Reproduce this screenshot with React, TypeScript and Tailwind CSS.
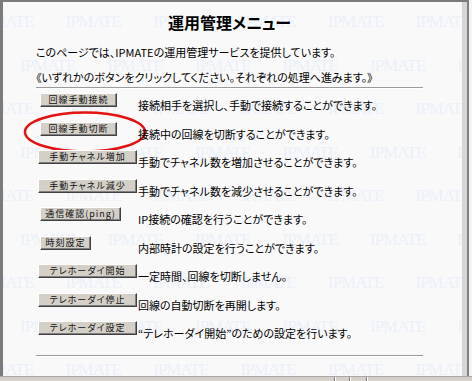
import React from 'react';

const rows = [
  { label: '回線手動接続', w: 'w-[77px] ml-[4px]', text: '接続相手を選択し、手動で接続することができます。' },
  { label: '回線手動切断', w: 'w-[77px] ml-[4px]', text: '接続中の回線を切断することができます。' },
  { label: '手動チャネル増加', w: 'w-[99px] ml-[2px]', text: '手動でチャネル数を増加させることができます。' },
  { label: '手動チャネル減少', w: 'w-[99px] ml-[2px]', text: '手動でチャネル数を減少させることができます。' },
  { label: '通信確認(ping)', w: 'w-[81px] ml-[4px]', text: 'IP接続の確認を行うことができます。' },
  { label: '時刻設定', w: 'w-[51px] ml-[4px]', text: '内部時計の設定を行うことができます。' },
  { label: 'テレホーダイ開始', w: 'w-[99px] ml-[2px]', text: '一定時間、回線を切断しません。' },
  { label: 'テレホーダイ停止', w: 'w-[99px] ml-[2px]', text: '回線の自動切断を再開します。' },
  { label: 'テレホーダイ設定', w: 'w-[99px] ml-[2px]', text: '“テレホーダイ開始”のための設定を行います。' },
];

function Watermark() {
  const lines = Array.from({ length: 9 });
  return (
    <div className="absolute left-0 right-0 -top-[2px] flex flex-col pointer-events-none select-none">
      {lines.map((_, i) => (
        <div
          key={i}
          className={`flex h-[43.5px] items-center shrink-0 ${i % 2 === 0 ? 'ml-[-25px]' : 'ml-[17px]'}`}
        >
          {Array.from({ length: 6 }).map((__, j) => (
            <span
              key={j}
              className="w-[87.5px] shrink-0 font-['Liberation_Serif',serif] text-[17px] tracking-[-1px] text-[#ebf0fa]"
            >
              IPMATE
            </span>
          ))}
        </div>
      ))}
    </div>
  );
}

function WinButton({ label, w }: { label: string; w: string }) {
  return (
    <button
      className={`${w} h-[14px] shrink-0 flex items-center justify-center bg-[#d4d0c8] border border-t-white border-l-white border-r-[#404040] border-b-[#404040] shadow-[inset_-1px_-1px_0_#808080] text-[9px] leading-[10px] tracking-[1px] text-[#111]`}
    >
      {label}
    </button>
  );
}

export default function App() {
  return (
    <div className="w-[472px] h-[381px] overflow-hidden flex flex-col bg-[#f0f0f0] font-['Noto_Sans_CJK_JP',sans-serif] [font-feature-settings:'palt'] text-black">
      <div className="flex h-[376px]">
        <div className="relative flex-1 overflow-hidden bg-[#f9f9f9] border-l-[3px] border-t-2 border-[#7b7b7b]">
          <Watermark />

          <svg className="absolute left-[20px] top-[108px]" width="124" height="44" viewBox="0 0 124 44">
            <ellipse cx="62" cy="22" rx="60" ry="19.5" fill="none" stroke="#e41212" strokeWidth="2.5" />
          </svg>

          <div className="relative ml-[33px] w-[387px] pt-[8px]">
            <h1 className="text-center text-[16px] font-bold leading-[24px]">運用管理メニュー</h1>
            <p className="mt-[10px] text-[11px] leading-[16px] whitespace-nowrap">
              このページでは、IPMATEの運用管理サービスを提供しています。
            </p>
            <p className="mt-[9px] text-[11px] leading-[16px] whitespace-nowrap">
              《いずれかのボタンをクリックしてください。それぞれの処理へ進みます。》
            </p>
            <div className="mt-[2px] border-t border-[#9a9a9a] border-b border-b-white" />

            <div className="mt-[4px] flex flex-col">
              {rows.map((r) => (
                <div key={r.label} className="flex h-[28.5px] items-start">
                  <div className="w-[102px] shrink-0 flex">
                    <WinButton label={r.label} w={r.w} />
                  </div>
                  <span className="mt-[4px] text-[11px] leading-[16px] whitespace-nowrap">{r.text}</span>
                </div>
              ))}
            </div>

            <div className="mt-[5px] border-t border-[#9a9a9a] border-b border-b-white" />
          </div>
        </div>
        <div className="w-[5px] bg-[#d6d6d6] border-t-2 border-[#7b7b7b]" />
        <div className="w-[2px] bg-[#808080]" />
        <div className="w-[3px] bg-[#f4f4f4]" />
      </div>
      <div className="h-[5px] flex bg-[#d4d0c8] border-t border-[#a8a8a8]">
        <div className="w-[335px] border-r border-[#808080]" />
        <div className="w-[15px] border-l border-white border-r border-r-[#808080]" />
        <div className="w-[17px] border-l border-white border-r border-r-[#808080]" />
        <div className="flex-1 border-l border-white" />
      </div>
    </div>
  );
}
